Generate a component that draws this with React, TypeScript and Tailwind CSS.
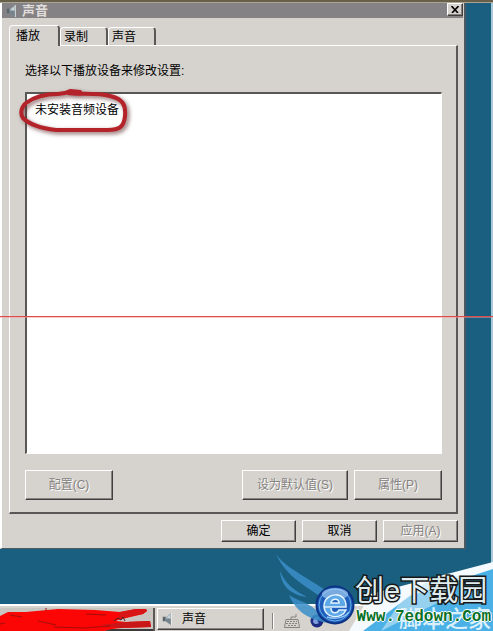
import React, { useState } from 'react';
import clsx from 'clsx';

const tabs = ['播放', '录制', '声音'];

const raised =
  'border border-t-white border-l-white border-r-[#404040] border-b-[#404040] shadow-[inset_-1px_-1px_0_#85827f]';

function SpeakerIcon({ className }: { className?: string }) {
  return (
    <svg viewBox="0 0 16 16" className={className} aria-hidden="true">
      <path d="M1 5h4v6H1z" fill="#59656d" />
      <path d="M5 5.5L12 0v16l-7-5z" fill="#9aa8b0" />
      <path d="M5 8h7v8l-7-5z" fill="#74838c" />
      <path d="M6 6l5-4v5z" fill="#c9d4da" />
      <path d="M12.5 0v16" stroke="#f0f4f6" />
    </svg>
  );
}

interface DialogButtonProps {
  label: string;
  className?: string;
  disabled?: boolean;
}

function DialogButton({ label, className, disabled }: DialogButtonProps) {
  return (
    <button
      type="button"
      disabled={disabled}
      className={clsx(
        'bg-[#d6d3ce] text-center whitespace-nowrap',
        raised,
        disabled && 'text-[#85827f] [text-shadow:1px_1px_0_#fff]',
        className
      )}
    >
      {label}
    </button>
  );
}

function SoundDialog() {
  const [activeTab, setActiveTab] = useState('播放');

  return (
    <section className="relative flex flex-1 flex-col mr-[27px] border-l-2 border-l-white border-r-2 border-r-[#4b5a63] border-b border-b-[#4b5a63] bg-[#d6d3ce]">
      {/* Title bar */}
      <header className="flex h-[15px] items-center bg-[#848284] pl-1 mr-px">
        <SpeakerIcon className="h-3 w-3" />
        <h1 className="flex-1 pl-1 font-bold text-[#e0deda] text-[13px] leading-3">声音</h1>
        <button
          type="button"
          aria-label="关闭"
          className={clsx('mb-0.5 flex h-[13px] w-4 items-center justify-center bg-[#d6d3ce]', raised)}
        >
          <svg viewBox="0 0 8 7" className="h-[7px] w-2">
            <path d="M0.5 0L7 7M7.5 0L1 7" stroke="#000" strokeWidth="1.6" />
          </svg>
        </button>
      </header>

      <div className="flex flex-1 flex-col pl-[7px] pr-1.5 pt-[7px] pb-1.5">
        {/* Tabs */}
        <div role="tablist" className="relative z-10 -mb-px flex items-end">
          {tabs.map((tab) => (
            <button
              key={tab}
              type="button"
              role="tab"
              aria-selected={tab === activeTab}
              onClick={() => setActiveTab(tab)}
              className={clsx(
                'rounded-t-sm border-t border-l border-t-white border-l-white border-r-2 border-r-[#5a5856] bg-[#d6d3ce] text-left',
                tab === activeTab ? 'h-[21px] w-[51px] pl-1.5' : 'mb-px h-[18px] w-12 pl-[3px]'
              )}
            >
              {tab}
            </button>
          ))}
        </div>

        {/* Tab page */}
        <div className="flex flex-1 flex-col border border-t-white border-l-white border-r-2 border-b-2 border-r-[#5a5856] border-b-[#5a5856] pr-3.5 pl-[15px] pt-4 pb-3">
          <p className="mb-3 leading-[18px]">选择以下播放设备来修改设置:</p>
          <div className="relative flex-1 border-t-2 border-l-2 border-t-[#5a5856] border-l-[#5a5856] border-r border-b border-r-white border-b-white bg-white px-2 pt-2">
            <span>未安装音频设备</span>
            <svg
              viewBox="0 0 112 46"
              className="absolute -top-[5px] -left-[9px] h-[46px] w-28 overflow-visible drop-shadow-[2px_2px_2px_rgba(90,40,40,0.7)]"
              fill="none"
              aria-hidden="true"
            >
              <path
                d="M50 4C60 6 78 3 92 7C105 10 108 16 107 27C106 38 101 41 90 41L38 41C20 39 11 35 5 29C2 25 3 18 8 14C16 8 28 5 40 5L47 4L52 2L62 3"
                stroke="#b5232a"
                strokeWidth="4"
                strokeLinecap="round"
                strokeLinejoin="round"
              />
            </svg>
          </div>
          <div className="mt-4 flex gap-1.5">
            <DialogButton label="配置(C)" disabled className="h-[30px] w-[88px]" />
            <DialogButton label="设为默认值(S)" disabled className="ml-auto h-[30px] w-[106px]" />
            <DialogButton label="属性(P)" disabled className="h-[30px] w-[88px]" />
          </div>
        </div>

        <div className="mt-1.5 flex justify-end gap-1.5">
          <DialogButton label="确定" className="h-[22px] w-[75px]" />
          <DialogButton label="取消" className="h-[22px] w-[75px]" />
          <DialogButton label="应用(A)" disabled className="h-[22px] w-[75px]" />
        </div>
      </div>
    </section>
  );
}

function Taskbar() {
  return (
    <footer className="flex h-[27px] items-start border-t-2 border-white bg-[#d6d3ce] pt-0.5">
      <div className="relative h-6 w-[155px] border-r-2 border-[#5a5856] bg-[#c9c5c0]">
        <svg viewBox="0 0 155 24" className="absolute inset-0 h-6 w-[155px]" aria-hidden="true">
          <path d="M110 21H153V24H100z" fill="#3d3b3a" />
          <path
            d="M0 8L8 4L26 4L58 1L95 2L120 4L136 1L146 1L147 3L143 6L118 12L116 13L126 14L150 13L151 19L122 20L112 21L100 24H0z"
            fill="#fb0505"
          />
          <path d="M100 17L126 14L150 13L151 19L120 20z" fill="#c91616" />
          <path d="M120 4L136 1L146 1L147 3L143 6L118 11z" fill="#d81414" />
          <path d="M10 7l12 2M38 13l18 4M54 19l30 1l26-2M0 16l5-1M86 6l20 1M46 0v3" stroke="#a30d0d" fill="none" />
          <path d="M114 13l4-3 3 2 2-3 2 4" stroke="#4b2020" fill="none" />
        </svg>
      </div>
      <button
        type="button"
        className={clsx('ml-0.5 flex h-[22px] w-[107px] items-center gap-2 bg-[#d6d3ce] pl-1', raised)}
      >
        <SpeakerIcon className="h-3.5 w-3" />
        声音
      </button>
      <div className="ml-2 flex h-6 items-center gap-2.5 pr-2 pt-0.5">
        <span className="h-4 w-0.5 border-l border-l-[#85827f] bg-white" />
        <svg viewBox="0 0 16 14" className="h-3.5 w-4" fill="none" stroke="#85827f" aria-hidden="true">
          <path d="M2 5.5h12l1.5 8H.5zM7 5V3h5V0" />
          <path d="M3 7.5h10M2 9.5h12M4 11.5h8" strokeDasharray="2 1" />
        </svg>
        <svg viewBox="0 0 14 14" className="h-3.5 w-3.5" aria-hidden="true">
          <circle cx="7" cy="7" r="6.5" fill="#1d2a80" />
          <path d="M3 8c0-4 3-5 5-5-1 2-1 4 1 6-3 2-5 1-6-1z" fill="#7c9cdb" />
        </svg>
      </div>
    </footer>
  );
}

function Watermark() {
  return (
    <div className="pointer-events-none absolute right-0 bottom-0 h-[79px] w-[220px]">
      <svg viewBox="0 0 220 79" className="absolute inset-0 h-full w-full" aria-hidden="true">
        <path d="M220 10L98 42L76 79H220z" fill="#f4fafd" />
        <path d="M220 17L186 28L137 44L90 79H220z" fill="#4bb0e6" />
        <path d="M152 31L190 23L176 45L134 66L108 79L126 52z" fill="#c9e8f7" opacity=".6" />
        <g fill="#3a8fc9" opacity=".85">
          <path d="M3 2C12 16 35 25 62 45L58 51C35 36 13 25 3 2z" />
          <path d="M7 19C12 31 20 38 34 45C18 43 8 34 7 19z" />
          <path d="M16 43C24 49 37 50 47 62L54 71C36 67 23 60 16 43z" />
        </g>
      </svg>
      <span className="absolute right-0.5 bottom-0 text-[23px] leading-6 font-medium text-[#d9f0fb]">脚本之家</span>
      <svg viewBox="0 0 40 40" className="absolute bottom-1.5 left-[42px] h-10 w-10" aria-hidden="true">
        <circle cx="20" cy="20" r="18.5" fill="#1f5fbb" stroke="#0c3384" strokeWidth="2" />
        <circle cx="20" cy="20" r="16" fill="none" stroke="#69aee9" />
        <ellipse cx="20" cy="9" rx="13" ry="6" fill="#a9d2f4" opacity=".65" />
        <path
          d="M9 22H31C32 5 9 7 9 21C9 34 27 35 31 25H24C22 29 16 29 16 23M16 18C17 13 24 13 24 18z"
          fill="#5fa8e8"
          stroke="#e2f3ff"
          strokeWidth="1.5"
        />
        <path d="M12 32C18 34 29 34 34 27" fill="none" stroke="#8fc6f5" strokeWidth="1.5" />
      </svg>
      <span className="absolute bottom-[22px] left-[82px] whitespace-nowrap text-[29px] leading-9 text-[#dfecef] [paint-order:stroke_fill] [-webkit-text-stroke:3px_#181818]">
        创e下载园
      </span>
      <span className="absolute right-0.5 bottom-1 whitespace-nowrap font-['Liberation_Mono',monospace] text-base leading-5 font-bold text-[#087026] [text-shadow:1px_0_0_#fff,-1px_0_0_#fff,0_1px_0_#fff,0_-1px_0_#fff]">
        Www.7edown.Com
      </span>
    </div>
  );
}

export default function App() {
  return (
    <main className="relative flex min-h-screen flex-col overflow-hidden bg-[#1a5f7f] font-['Liberation_Sans','Noto_Sans_CJK_SC',sans-serif] text-xs text-black">
      <div className="h-[3px] border-b border-[#aaa595] bg-[#685f48]" />
      <SoundDialog />
      <div className="h-[55px]" />
      <Taskbar />
      <div className="absolute top-[3px] right-0 bottom-0 w-0.5 bg-[#a9cbd8]" />
      <Watermark />
      <div className="absolute inset-x-0 top-1/2 h-0.5 border-t border-[#e04a4a] bg-[#e9a09d]/50" />
    </main>
  );
}
